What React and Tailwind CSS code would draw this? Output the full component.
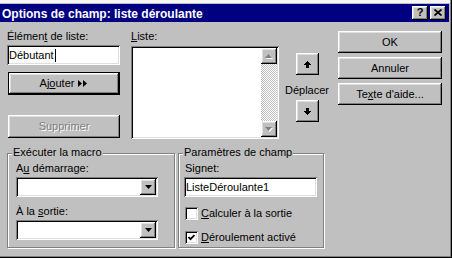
const raised = 'shadow-[inset_-1px_-1px_#000,inset_1px_1px_#fff,inset_-2px_-2px_#808080,inset_2px_2px_#dfdfdf]';
const sunken = 'shadow-[inset_1px_1px_#808080,inset_-1px_-1px_#fff,inset_2px_2px_#000,inset_-2px_-2px_#dfdfdf]';

function Btn({ children, className = '', disabled = false, isDefault = false }) {
    return (
        <div
            className={`flex items-center justify-center bg-[#c0c0c0] ${isDefault ? 'border border-black' : ''} ${raised} ${disabled ? 'text-[#808080] [text-shadow:1px_1px_0_#fff]' : 'text-black'} ${className}`}
        >
            {children}
        </div>
    );
}

function U({ children }) {
    return <span className="underline underline-offset-[1px]">{children}</span>;
}

function TriDown({ color = '#000' }) {
    return (
        <svg width="7" height="4" viewBox="0 0 7 4">
            <polygon points="0,0 7,0 3.5,4" fill={color} />
        </svg>
    );
}

function GrayTri({ up }) {
    return (
        <svg width="8" height="5" viewBox="0 0 8 5">
            {up ? (
                <>
                    <polygon points="4.5,1 8,5 1,5" fill="#fff" />
                    <polygon points="3.5,0 7,4 0,4" fill="#808080" />
                </>
            ) : (
                <>
                    <polygon points="1,1 8,1 4.5,5" fill="#fff" />
                    <polygon points="0,0 7,0 3.5,4" fill="#808080" />
                </>
            )}
        </svg>
    );
}

function MoveArrow({ up }) {
    const head = [[3, 1], [2, 3], [1, 5], [0, 7]];
    const stem = [[2, 3], [2, 3], [2, 3]];
    const rows = up ? [...head, ...stem] : [...stem, ...head.slice().reverse()];
    return (
        <svg width="7" height="7" viewBox="0 0 7 7" shapeRendering="crispEdges">
            {rows.map(([x, w], y) => (
                <rect key={y} x={x} y={y} width={w} height="1" fill="#000" />
            ))}
        </svg>
    );
}

function Combo() {
    return (
        <div className={`flex h-[20px] w-[142px] bg-white p-[2px] ${sunken}`}>
            <div className="flex-1" />
            <div className={`flex w-[16px] items-center justify-center bg-[#c0c0c0] ${raised}`}>
                <TriDown />
            </div>
        </div>
    );
}

function Check({ checked }) {
    return (
        <div className={`flex h-[13px] w-[13px] items-center justify-center bg-white ${sunken}`}>
            {checked && (
                <svg width="7" height="7" viewBox="0 0 7 7">
                    <path d="M0.5 3 L2.5 5.2 L6.5 1" fill="none" stroke="#000" strokeWidth="1.8" />
                </svg>
            )}
        </div>
    );
}

function Group({ title, className = '', children }) {
    return (
        <div className={`relative h-[95px] border border-[#808080] shadow-[1px_1px_0_#fff,inset_1px_1px_0_#fff] ${className}`}>
            <div className="absolute -top-[8px] left-[4px] bg-[#c0c0c0] px-px">{title}</div>
            {children}
        </div>
    );
}

export default function App() {
    return (
        <div className="relative h-[258px] w-[452px] overflow-hidden bg-[#c0c0c0] font-['Liberation_Sans',Arial,sans-serif] text-[11px] leading-[13px] text-black shadow-[inset_-1px_-1px_#000,inset_-2px_-2px_#808080]">
            <div className="h-[3px] w-[450px] bg-[#f6f6f6]" />
            <div className="h-px" />

            {/* title bar */}
            <div className="flex h-[18px] w-[449px] items-center bg-[#000080] pl-[2px] pr-[3px]">
                <div className="flex-1 self-start pt-[4px] text-[12px] font-bold leading-[12px] text-white">
                    Options de champ: liste déroulante
                </div>
                <div className={`flex h-[14px] w-[16px] items-center justify-center bg-[#c0c0c0] pb-px text-[11px] font-bold leading-none ${raised}`}>
                    ?
                </div>
                <div className={`ml-[2px] flex h-[14px] w-[16px] items-center justify-center bg-[#c0c0c0] pb-px ${raised}`}>
                    <svg width="8" height="7" viewBox="0 0 8 7">
                        <path d="M0.5 0.5 L7.5 6.5 M7.5 0.5 L0.5 6.5" stroke="#000" strokeWidth="1.7" />
                    </svg>
                </div>
            </div>

            {/* upper part */}
            <div className="flex h-[131px] items-start">
                <div className="ml-[7px] flex w-[113px] flex-col pt-[8px]">
                    <div className="h-[13px]">Élémen<U>t</U> de liste:</div>
                    <div className={`mt-[2px] flex h-[20px] items-center bg-white px-[2px] ${sunken}`}>
                        <span>Débutant</span>
                        <span className="ml-px h-[13px] w-px bg-black" />
                    </div>
                    <Btn isDefault className="ml-px mt-[7px] h-[23px] w-[112px] gap-[4px]">
                        <span>Aj<U>o</U>uter</span>
                        <svg width="10" height="7" viewBox="0 0 10 7">
                            <polygon points="0,0 4,3.5 0,7" fill="#000" />
                            <polygon points="5,0 9,3.5 5,7" fill="#000" />
                        </svg>
                    </Btn>
                    <Btn disabled className="ml-px mt-[20px] h-[23px] w-[112px]">
                        Supprimer
                    </Btn>
                </div>

                <div className="ml-[11px] flex w-[148px] flex-col pt-[8px]">
                    <div className="h-[13px]"><U>L</U>iste:</div>
                    <div className={`mt-[3px] flex h-[93px] bg-white p-[2px] ${sunken}`}>
                        <div className="flex-1" />
                        <div className="flex w-[16px] flex-col bg-[repeating-conic-gradient(#c0c0c0_0_25%,#fff_0_50%)] bg-[length:2px_2px]">
                            <div className={`flex h-[16px] items-center justify-center bg-[#c0c0c0] ${raised}`}>
                                <GrayTri up />
                            </div>
                            <div className="flex-1" />
                            <div className={`flex h-[16px] items-center justify-center bg-[#c0c0c0] ${raised}`}>
                                <GrayTri />
                            </div>
                        </div>
                    </div>
                </div>

                <div className="ml-[6px] flex w-[44px] flex-col items-center pt-[31px]">
                    <Btn className="h-[22px] w-[23px]">
                        <MoveArrow up />
                    </Btn>
                    <div className="mt-[9px] h-[13px]">Déplacer</div>
                    <Btn className="mt-[3px] h-[22px] w-[23px]">
                        <MoveArrow />
                    </Btn>
                </div>

                <div className="ml-[9px] flex w-[104px] flex-col gap-[4px] pt-[9px]">
                    <Btn className="h-[22px]">OK</Btn>
                    <Btn className="h-[22px]">Annuler</Btn>
                    <Btn className="h-[22px]">
                        <span>Te<U>x</U>te d'aide...</span>
                    </Btn>
                </div>
            </div>

            {/* lower part */}
            <div className="flex gap-[3px] pl-[7px]">
                <Group title="Exécuter la macro" className="w-[168px] pl-[8px] pt-[8px]">
                    <div className="h-[13px]">A<U>u</U> démarrage:</div>
                    <div className="mt-[2px]"><Combo /></div>
                    <div className="mt-[8px] h-[13px]">À la <U>s</U>ortie:</div>
                    <div className="mt-[2px]"><Combo /></div>
                </Group>

                <Group title="Paramètres de champ" className="w-[146px] pl-[5px] pt-[8px]">
                    <div className="ml-px h-[13px]">Si<U>g</U>net:</div>
                    <div className={`mt-[2px] flex h-[20px] w-[133px] items-center bg-white px-[2px] ${sunken}`}>
                        ListeDéroulante1
                    </div>
                    <div className="ml-px mt-[10px] flex h-[13px] items-center gap-[3px]">
                        <Check />
                        <span><U>C</U>alculer à la sortie</span>
                    </div>
                    <div className="ml-px mt-[11px] flex h-[13px] items-center gap-[3px]">
                        <Check checked />
                        <span><U>D</U>éroulement activé</span>
                    </div>
                </Group>
            </div>
        </div>
    );
}
